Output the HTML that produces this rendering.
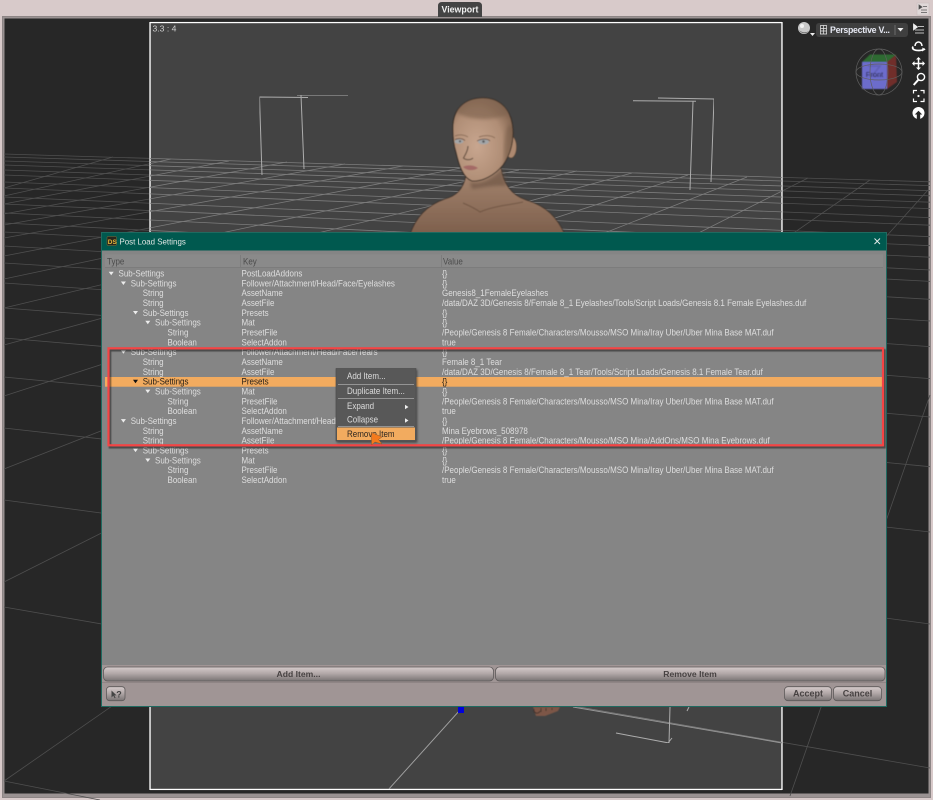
<!DOCTYPE html>
<html><head><meta charset="utf-8"><title>Viewport</title>
<style>
html,body{margin:0;padding:0;background:#d8caca;width:933px;height:800px;overflow:hidden}
svg{display:block;position:absolute;left:0;top:0}
text{font-family:"Liberation Sans",sans-serif}
.r text{font-size:8.8px;fill:#dedede}
.r text,.m,.n{transform-box:fill-box;transform-origin:0 50%;transform:scaleX(.91)}
.r{filter:url(#t)}
.b{font-size:8.6px;font-weight:bold;fill:#474242;text-anchor:middle}
.m{font-size:8.8px;fill:#dcdcdc}
</style></head><body>
<svg width="933" height="800" viewBox="0 0 933 800">
<defs>
<clipPath id="fr"><rect x="150" y="23" width="632" height="766"/></clipPath>
<clipPath id="hd"><path d="M453,130C452,108 466,98 483,98C500,98 513,110 513,133C513,145 510,155 503,165C495,175 482,182 472,181C463,178 459,165 456,152C454,146 453,138 453,130Z"/></clipPath>
<linearGradient id="btn" x1="0" y1="0" x2="0" y2="1"><stop offset="0" stop-color="#d6cccc"/><stop offset=".45" stop-color="#b3a9a9"/><stop offset="1" stop-color="#797474"/></linearGradient>
<radialGradient id="face" cx=".4" cy=".58" r=".72"><stop offset="0" stop-color="#c8a68f"/><stop offset=".6" stop-color="#b08e76"/><stop offset=".9" stop-color="#866853"/><stop offset="1" stop-color="#5a4436"/></radialGradient>
<linearGradient id="body" x1="0" y1="0" x2="0" y2="1"><stop offset="0" stop-color="#a68670"/><stop offset="1" stop-color="#7d5f4c"/></linearGradient>
<filter id="t" x="0" y="0" width="100%" height="100%"><feGaussianBlur stdDeviation=".22"/></filter>
<filter id="s"><feGaussianBlur stdDeviation=".45"/></filter>
<filter id="s2"><feGaussianBlur stdDeviation="1.5"/></filter>
<filter id="sh" x="-5%" y="-10%" width="110%" height="120%"><feDropShadow dx="1" dy="1.5" stdDeviation="1" flood-color="#000" flood-opacity=".45"/></filter>
<g id="grid">
<path d="M4,154L930,181.8M4,157L930,185.6M4,161L930,190.7M4,165L930,195.8M4,170L930,202.2M4,175L930,208.6M4,182L930,217.6M4,188L930,225.2M4,197L930,236.7M4,204L930,245.7M4,213L930,257.2M4,223L930,270M4,232L930,281.4M4,246L930,299.3M4,263L930,321M4,283L930,346.6M4,308L930,378.6M4,338L930,417M4,377L930,466.7M4,428L930,532M4,500L930,624M4,607L930,768M4,781L100,800"/>
<path d="M870,180L4,781M808,178L4,582M747,177L4,469M688,175L4,396M632,173L4,345M577,171L4,308M519,170L4,279M461,168L4,256M403,166L4,238M345,164L4,225M287,162L4,214M229,161L4,204M171,159L4,196M113,157L4,188M928,190L388,790M930,395L790,796"/>
</g>
</defs>

<!-- page and viewport -->
<rect width="933" height="800" fill="#d8caca"/>
<rect x="2.5" y="16.5" width="928" height="781" fill="#9a9292" stroke="#8d8585"/>
<rect x="4.5" y="18.5" width="924" height="775" fill="#272727"/>
<path d="M438,17V6Q438,2 442,2H478Q482,2 482,6V17Z" fill="#444"/>
<text x="460" y="12.5" text-anchor="middle" font-size="8.8" font-weight="bold" fill="#f2f2f2">Viewport</text>
<rect x="917" y="3" width="12" height="12" fill="#e0d8d8" stroke="#c8bfbf" stroke-width=".6"/>
<path d="M919,5l3,2l-3,2zM923,6.5h4M921,10h6M921,12.5h6" fill="#444" stroke="#555" stroke-width=".8"/>

<!-- grid outside + frame -->
<use href="#grid" fill="none" stroke="#4f4f4f" stroke-width=".8"/>
<rect x="149" y="21" width="634" height="770" fill="#000"/>
<rect x="150" y="22.5" width="632" height="767" fill="#434343" stroke="#fff" stroke-width="1.4"/>
<g clip-path="url(#fr)"><use href="#grid" fill="none" stroke="#7c7c7c" stroke-width=".8"/></g>
<path d="M928,190L388,790" clip-path="url(#fr)" stroke="#a0a0a0" stroke-width=".9" fill="none"/>
<path d="M573,707L782,743" fill="none" stroke="#989898" stroke-width=".9"/>
<text x="152.5" y="31.5" font-size="8.6" fill="#cfcfcf">3.3 : 4</text>

<!-- boxes -->
<g fill="none" stroke="#adadad" stroke-width="1" filter="url(#t)">
<path d="M308,97.5L259.5,97L262,175M297,95L348,95M301,95L304,169"/>
<path d="M633,100.7L696,101.3M693,101.7L690,190M658,98L714,99L711,182"/>
<path d="M670,707L669,743L616,733M672,738L668,743M689,707L687,711"/>
</g>

<!-- figure -->
<g filter="url(#s)">
<path d="M410,235C416,216 428,205 445,199C456,196 463,190 466,176L501,168C503,183 511,195 526,200C546,206 557,217 565,235Z" fill="url(#body)" stroke="#3c2e25" stroke-width=".7"/>
<path d="M470,182C480,186 494,178 502,168L507,186C498,185 484,187 472,189Z" fill="#5d4738" opacity=".5" filter="url(#s2)"/>
<path d="M463,203C470,206 476,209 480,212C493,206 510,205 523,202" fill="none" stroke="#5d4536" stroke-width="1" opacity=".6"/>
<ellipse cx="511" cy="147" rx="5.5" ry="11" fill="#ad8970" stroke="#5a4434" stroke-width=".6"/>
<path d="M453,130C452,108 466,98 483,98C500,98 513,110 513,133C513,145 510,155 503,165C495,175 482,182 472,181C463,178 459,165 456,152C454,146 453,138 453,130Z" fill="url(#face)" stroke="#33271f" stroke-width=".9"/>
<g clip-path="url(#hd)">
<ellipse cx="484" cy="103" rx="34" ry="16" fill="#7f6350" opacity=".65" filter="url(#s2)"/>
<ellipse cx="510" cy="150" rx="6" ry="25" fill="#6e5442" opacity=".45" filter="url(#s2)"/>
</g>
<path d="M468,146C468,151 465,155 463.500,158C466,160.500 471,160 473,158" fill="none" stroke="#4c392e" stroke-width="1.200" opacity=".75"/>
<path d="M455,136C460,134 465,135 468,137M479,137C484,135 491,135 495,138" fill="none" stroke="#8d6f5a" stroke-width="1"/>
<ellipse cx="459" cy="141.500" rx="4.500" ry="2.200" fill="#a3a6a8"/>
<ellipse cx="483.500" cy="141.800" rx="5.500" ry="2.600" fill="#a3a6a8"/>
<circle cx="460" cy="141.300" r="1.100" fill="#5a5a5c"/><circle cx="483.500" cy="141.500" r="1.300" fill="#5a5a5c"/>
<path d="M455,139.500C459,138 463,138.500 465,140.500M477,141C481,138.500 488,138.500 490,141" fill="none" stroke="#53403a" stroke-width=".7"/>
<path d="M463,167C467,164.500 474,165 478,168C474,171 467,171 463,167Z" fill="#a46a66"/>
<path d="M533,707L560,707L558,711L545,716L536,716Z" fill="#7d5646"/>
<path d="M534,709a3,3 0 0 0 6,2M541,708v4M546,708v3M552,708v2" stroke="#40302a" stroke-width="1" fill="none"/>
</g>
<rect x="458" y="707" width="6" height="6" fill="#0000dc"/>

<!-- viewport tools -->
<circle cx="804" cy="28" r="6" fill="#c9c9c9"/><path d="M799,30a6,6 0 0 0 10,1a8,8 0 0 1-10,-1z" fill="#6f6f6f"/><circle cx="802" cy="26" r="2" fill="#f2f2f2"/>
<path d="M810,33h5l-2.500,3z" fill="#eee"/>
<rect x="816" y="23" width="92" height="14" rx="3" fill="#3f3f3f"/>
<path d="M820,34h7M820.500,25.500h6v8.500h-6zM823.500,25.500v8.500M820.500,28.500h6M820.500,31h6" fill="none" stroke="#ececec" stroke-width=".7"/>
<text x="830" y="33" font-size="8.800" font-weight="bold" fill="#e6e8f2" textLength="60">Perspective V...</text>
<path d="M895,25v10" stroke="#777" stroke-width=".8"/><path d="M897.500,28h6l-3,3.500z" fill="#eee"/>
<path d="M913.500,24l4,3l-4,3zM918,26.500h6M915,30h9M915,33h9" fill="#eee" stroke="#eee" stroke-width=".8"/>
<g fill="none" stroke="#fff" stroke-width="1.500">
<path d="M915,46a3.500,4 0 1 1 7,0"/><path d="M913,46.500c-1.500,3 2,4 6,4c2,0 4,-.5 6,-1.500" stroke-width="1.700"/>
<path d="M918.500,58v10.500M913,63.500h11"/>
<circle cx="921" cy="77" r="3.600" stroke-width="1.400"/><path d="M918.300,79.800L913.700,85" stroke-width="2"/>
<path d="M913.500,93.500v-3h3.500M920.500,90.500h3.500v3M913.500,98.500v3h3.500M920.500,101.500h3.500v-3" stroke-width="1.200"/>
</g>
<path d="M918.500,57l-2.500,2.500h5zM918.500,70l-2.500,-2.500h5zM912,63.500l2.500,-2.500v5zM925,63.500l-2.500,-2.500v5z" fill="#fff"/>
<path d="M922,51.500l3.500,-2l-3,-2z" fill="#fff"/>
<circle cx="918.500" cy="96" r="1.100" fill="#fff"/>
<circle cx="918.500" cy="113" r="6" fill="#fff"/><path d="M914.800,114.500l3.700,-3.800l3.700,3.800h-2v5h-3.400v-5z" fill="#272727"/>

<!-- view cube -->
<g filter="url(#s)">
<path d="M862,62L870,54.500H896L887,62Z" fill="#2f6a30"/>
<path d="M887,62L896,55L897,82L887,89Z" fill="#6f2f2c"/>
<rect x="862" y="62" width="25" height="27" fill="#6c6ccb"/>
<path d="M868,66h12l-8,10h9" fill="none" stroke="#6060b4" stroke-width="1.500"/>
<text x="874.500" y="77" text-anchor="middle" font-size="7.500" fill="#20203a">Front</text>
</g>
<g fill="none" stroke="#5f5f5f" stroke-width=".7"><circle cx="879" cy="72" r="23"/><ellipse cx="879" cy="72" rx="23" ry="8"/><ellipse cx="879" cy="72" rx="9" ry="23"/></g>

<!-- dialog -->
<rect x="101.500" y="232.500" width="785" height="474" fill="#858585" stroke="#1f6a60"/>
<rect x="102" y="233" width="784" height="17.500" fill="#00594f"/>
<rect x="107" y="236.500" width="9.500" height="9" rx="1" fill="#28261d" stroke="#7a6f3a" stroke-width=".5"/>
<text x="107.800" y="243.800" font-size="6.500" font-weight="bold" fill="#e3b93c">DS</text>
<text class="n" x="119.500" y="244.300" font-size="8.700" fill="#e0e6e4">Post Load Settings</text>
<path d="M874.500,238.500l5.500,5.500M880,238.500l-5.500,5.500" stroke="#e8eeee" stroke-width=".9"/>

<rect x="105" y="254.500" width="778" height="13" fill="#8a8a8a"/>
<path d="M240.500,255v12M441.500,255v12M105,267.500H883" stroke="#7a7a7a" stroke-width=".8"/>
<g font-size="8.800" fill="#4c4c4c"><text class="n" x="107" y="264.500">Type</text><text class="n" x="243" y="264.500">Key</text><text class="n" x="443" y="264.500">Value</text></g>

<!-- selected row -->
<rect x="105" y="377" width="778" height="9.700" fill="#f2ab5f"/>

<!-- tree arrows -->
<path d="M108.700,271.700h5l-2.500,3.500zM120.900,281.500h5l-2.500,3.500zM133,311h5l-2.500,3.500zM145.300,320.800h5l-2.500,3.500zM120.900,350.300h5l-2.500,3.500zM145.300,389.600h5l-2.500,3.500zM120.900,419.100h5l-2.500,3.500zM133,448.600h5l-2.500,3.500zM145.300,458.500h5l-2.500,3.500z" fill="#ececec"/>
<path d="M133,379.800h5l-2.500,3.500z" fill="#111"/>

<g class="r">
<text x="118.500" y="276.500">Sub-Settings</text><text x="241.500" y="276.500">PostLoadAddons</text><text x="442" y="276.500">{}</text>
<text x="130.700" y="286.300">Sub-Settings</text><text x="241.500" y="286.300">Follower/Attachment/Head/Face/Eyelashes</text><text x="442" y="286.300">{}</text>
<text x="142.700" y="296.200">String</text><text x="241.500" y="296.200">AssetName</text><text x="442" y="296.200">Genesis8_1FemaleEyelashes</text>
<text x="142.700" y="306">String</text><text x="241.500" y="306">AssetFile</text><text x="442" y="306">/data/DAZ 3D/Genesis 8/Female 8_1 Eyelashes/Tools/Script Loads/Genesis 8.1 Female Eyelashes.duf</text>
<text x="142.700" y="315.800">Sub-Settings</text><text x="241.500" y="315.800">Presets</text><text x="442" y="315.800">{}</text>
<text x="155" y="325.700">Sub-Settings</text><text x="241.500" y="325.700">Mat</text><text x="442" y="325.700">{}</text>
<text x="167.500" y="335.500">String</text><text x="241.500" y="335.500">PresetFile</text><text x="442" y="335.500">/People/Genesis 8 Female/Characters/Mousso/MSO Mina/Iray Uber/Uber Mina Base MAT.duf</text>
<text x="167.500" y="345.300">Boolean</text><text x="241.500" y="345.300">SelectAddon</text><text x="442" y="345.300">true</text>
<text x="130.700" y="355.200">Sub-Settings</text><text x="241.500" y="355.200">Follower/Attachment/Head/Face/Tears</text><text x="442" y="355.200">{}</text>
<text x="142.700" y="365">String</text><text x="241.500" y="365">AssetName</text><text x="442" y="365">Female 8_1 Tear</text>
<text x="142.700" y="374.800">String</text><text x="241.500" y="374.800">AssetFile</text><text x="442" y="374.800">/data/DAZ 3D/Genesis 8/Female 8_1 Tear/Tools/Script Loads/Genesis 8.1 Female Tear.duf</text>
<text x="142.700" y="384.700" style="fill:#221c14">Sub-Settings</text><text x="241.500" y="384.700" style="fill:#221c14">Presets</text><text x="442" y="384.700" style="fill:#221c14">{}</text>
<text x="155" y="394.500">Sub-Settings</text><text x="241.500" y="394.500">Mat</text><text x="442" y="394.500">{}</text>
<text x="167.500" y="404.300">String</text><text x="241.500" y="404.300">PresetFile</text><text x="442" y="404.300">/People/Genesis 8 Female/Characters/Mousso/MSO Mina/Iray Uber/Uber Mina Base MAT.duf</text>
<text x="167.500" y="414.200">Boolean</text><text x="241.500" y="414.200">SelectAddon</text><text x="442" y="414.200">true</text>
<text x="130.700" y="424">Sub-Settings</text><text x="241.500" y="424">Follower/Attachment/Head/Face/Eyebrows</text><text x="442" y="424">{}</text>
<text x="142.700" y="433.800">String</text><text x="241.500" y="433.800">AssetName</text><text x="442" y="433.800">Mina Eyebrows_508978</text>
<text x="142.700" y="443.700">String</text><text x="241.500" y="443.700">AssetFile</text><text x="442" y="443.700">/People/Genesis 8 Female/Characters/Mousso/MSO Mina/AddOns/MSO Mina Eyebrows.duf</text>
<text x="142.700" y="453.500">Sub-Settings</text><text x="241.500" y="453.500">Presets</text><text x="442" y="453.500">{}</text>
<text x="155" y="463.300">Sub-Settings</text><text x="241.500" y="463.300">Mat</text><text x="442" y="463.300">{}</text>
<text x="167.500" y="473.200">String</text><text x="241.500" y="473.200">PresetFile</text><text x="442" y="473.200">/People/Genesis 8 Female/Characters/Mousso/MSO Mina/Iray Uber/Uber Mina Base MAT.duf</text>
<text x="167.500" y="483">Boolean</text><text x="241.500" y="483">SelectAddon</text><text x="442" y="483">true</text>
</g>

<!-- footer -->
<rect x="102" y="665" width="784" height="41" fill="#a09595"/>
<rect x="103.500" y="667" width="390" height="14" rx="4" fill="url(#btn)" stroke="#5e5a5a" stroke-width=".8"/>
<rect x="495.500" y="667" width="389.500" height="14" rx="4" fill="url(#btn)" stroke="#5e5a5a" stroke-width=".8"/>
<path d="M102,682.500H886" stroke="#8f8585"/>
<text class="b" x="298.500" y="677">Add Item...</text>
<text class="b" x="690" y="677">Remove Item</text>
<rect x="106.500" y="686.700" width="18.500" height="14" rx="3" fill="url(#btn)" stroke="#5e5a5a" stroke-width=".8"/>
<path d="M111.500,690.500v7l1.800,-1.700l1.300,2.500l1,-.5l-1.300,-2.400h2.200z" fill="#444"/>
<text x="116.300" y="697.500" font-size="9" font-weight="bold" fill="#444">?</text>
<rect x="784.500" y="686.700" width="47" height="14" rx="3.500" fill="url(#btn)" stroke="#5e5a5a" stroke-width=".8"/>
<rect x="833.500" y="686.700" width="48" height="14" rx="3.500" fill="url(#btn)" stroke="#5e5a5a" stroke-width=".8"/>
<text class="b" x="808" y="696.700" style="font-size:9px">Accept</text>
<text class="b" x="857.500" y="696.700" style="font-size:9px">Cancel</text>

<!-- red highlight -->
<rect x="110" y="350.300" width="774.500" height="97" fill="none" stroke="#000" stroke-opacity=".45" stroke-width="2.500" filter="url(#s)"/>
<rect x="108.500" y="348.300" width="774.500" height="97" fill="none" stroke="#f54444" stroke-width="2.200"/>

<!-- context menu -->
<rect x="336" y="368.500" width="80" height="72.500" fill="#585858" stroke="#4a4a4a" stroke-width=".6" filter="url(#sh)"/>
<path d="M338,384.500H414M338,398.500H414M338,426.500H414" stroke="#a8a8a8" stroke-width=".8"/>
<text class="m" x="347" y="379">Add Item...</text>
<text class="m" x="347" y="394">Duplicate Item...</text>
<text class="m" x="347" y="409">Expand</text>
<text class="m" x="347" y="422.500">Collapse</text>
<path d="M405,404.800l3.500,2.200l-3.500,2.200zM405,418.300l3.500,2.200l-3.500,2.200z" fill="#eee"/>
<rect x="337" y="427.500" width="78" height="12.500" fill="#f2ab5f"/>
<text class="n" x="347" y="437" font-size="8.800" fill="#2d2620">Remove Item</text>

<!-- cursor -->
<path d="M371.500,432.500L371.500,445L375,442L382,444L378.500,439.500L382,437Z" fill="#f47a1c" stroke="#8a5a30" stroke-width=".5"/>
</svg>
</body></html>
